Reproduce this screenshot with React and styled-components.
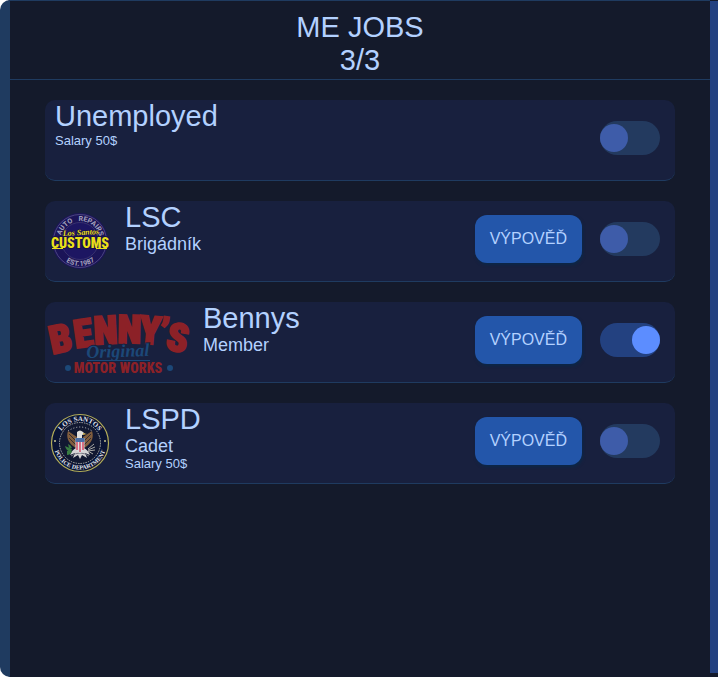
import React, { useState } from "react";
import styled, { createGlobalStyle } from "styled-components";

const GlobalStyle = createGlobalStyle`
  * { box-sizing: border-box; }
  body {
    margin: 0;
    background: #ffffff;
    color: #b3d1ff;
    font-family: "Liberation Sans", Arial, sans-serif;
  }
`;

const Panel = styled.main`
  display: flex;
  min-height: 100vh;
  background: #141a2b;
  border-left: 10px solid #1f3b60;
  border-radius: 10px 0 0 10px;
`;

const Content = styled.div`
  flex: 1;
  min-width: 0;
  border-top: 1px solid #1f3b60;
`;

const ScrollRail = styled.div`
  display: flex;
  width: 8px;
  padding: 1px 0 4px;
`;

const ScrollThumb = styled.div`
  flex: 1;
  background: #234180;
`;

const Header = styled.header`
  padding: 10px 0 2px;
  border-bottom: 1px solid #1f3b60;
  text-align: center;
`;

const Title = styled.h1`
  margin: 0;
  font-size: 29px;
  line-height: 33px;
  font-weight: 400;
`;

const Count = styled.p`
  margin: 0;
  font-size: 29px;
  line-height: 33px;
`;

const JobList = styled.ul`
  display: flex;
  flex-direction: column;
  gap: 20px;
  margin: 0;
  padding: 20px 35px;
  list-style: none;
`;

const JobCard = styled.li`
  display: flex;
  align-items: flex-start;
  min-height: 81px;
  padding: 0 15px 0 ${(p) => (p.$hasLogo ? 5 : 10)}px;
  background: #18203e;
  border-bottom: 1px solid #1f3b60;
  border-radius: 10px;
`;

const Logo = styled.svg`
  flex: none;
  width: ${(p) => p.$width}px;
  height: 60px;
  margin: 10px 15px 0 0;
  overflow: visible;
`;

const Info = styled.div`
  flex: 1;
  min-width: 0;
`;

const JobName = styled.h2`
  margin: 0;
  font-size: 29px;
  line-height: 33px;
  font-weight: 400;
`;

const Role = styled.p`
  margin: 0;
  font-size: 18px;
  line-height: 20px;
`;

const Salary = styled.p`
  margin: 0;
  font-size: 13px;
  line-height: 16px;
`;

const Controls = styled.div`
  display: flex;
  align-items: center;
  gap: 18px;
  height: 48px;
  margin-top: 14px;
`;

const QuitButton = styled.button`
  height: 48px;
  padding: 0 15px;
  border: 0;
  border-radius: 12px;
  background: #2356aa;
  box-shadow: 1px 2px 3px #0b2748;
  color: #b3d1ff;
  font: 16px "Liberation Sans", Arial, sans-serif;
  cursor: pointer;
`;

const Toggle = styled.input`
  appearance: none;
  display: flex;
  align-items: center;
  width: 60px;
  height: 34px;
  margin: 0;
  border-radius: 17px;
  background: #233a5f;
  cursor: pointer;

  &::before {
    content: "";
    width: 28px;
    height: 28px;
    border-radius: 50%;
    background: #3e5ca9;
  }

  &:checked {
    justify-content: flex-end;
    background: #234180;
  }

  &:checked::before {
    background: #5c8dff;
  }
`;

function CustomsLogo() {
  return (
    <Logo $width={60} viewBox="0 0 60 60" role="img" aria-label="Los Santos Customs">
      <defs>
        <path id="lsc-top" d="M10 30a20 20 0 0 1 40 0" />
        <path id="lsc-bottom" d="M5 30a25 25 0 0 0 50 0" />
      </defs>
      <circle cx="30" cy="30" r="28" fill="#1b1458" />
      <circle cx="30" cy="30" r="26.5" fill="none" stroke="#4b4580" strokeWidth="1" />
      <circle cx="30" cy="30" r="18.5" fill="#1d1662" stroke="#38316f" strokeWidth="1" />
      <g fill="#a5a2bd" fontFamily="Roboto" fontWeight="700" fontSize="7">
        <text textAnchor="middle"><textPath href="#lsc-top" startOffset="24%">AUTO</textPath></text>
        <text textAnchor="middle"><textPath href="#lsc-top" startOffset="70%">REPAIRS</textPath></text>
        <text textAnchor="middle"><textPath href="#lsc-bottom" startOffset="40%">EST.</textPath></text>
        <text textAnchor="middle"><textPath href="#lsc-bottom" startOffset="60%">1987</textPath></text>
      </g>
      <g fill="#e9df19" stroke="#171047" paintOrder="stroke" textAnchor="middle">
        <text x="31" y="24" fontFamily="Liberation Serif" fontStyle="italic" fontWeight="700" fontSize="8" strokeWidth="1" transform="rotate(-3 31 23)">Los Santos</text>
        <text x="30" y="37" fontFamily="Roboto Condensed, Roboto" fontWeight="900" fontSize="14" strokeWidth="2">CUSTOMS</text>
      </g>
      <path d="M2 37.500h11M46 37.500h11" stroke="#e9df19" strokeWidth="1" />
    </Logo>
  );
}

const ARCHED_LETTERS = [
  ["B", 13, 40, -12],
  ["E", 35, 35, -8],
  ["N", 56, 32, -3],
  ["N", 79, 31, 1],
  ["Y", 99, 32, 5],
  ["’", 112, 34, 8],
  ["S", 125, 39, 11],
];

function BennysLogo() {
  return (
    <Logo $width={138} viewBox="0 0 138 60" role="img" aria-label="Benny's Original Motor Works">
      <g fill="#8c2127" stroke="#8c2127" strokeWidth="2" fontFamily="Roboto Condensed, Roboto" fontWeight="900" fontSize="39" textAnchor="middle">
        {ARCHED_LETTERS.map(([letter, x, y, angle]) => (
          <text key={x} x={x} y={y} transform={`rotate(${angle} ${x} ${y})`}>{letter}</text>
        ))}
      </g>
      <text x="68" y="45" fill="#1c4878" stroke="#18203e" strokeWidth="2" paintOrder="stroke" fontFamily="Liberation Serif" fontStyle="italic" fontWeight="700" fontSize="18" textAnchor="middle" transform="rotate(-2 68 45)">Original</text>
      <path d="M37 48.500h63" stroke="#1c4878" strokeWidth="1" />
      <g fill="#1c4878">
        <circle cx="18" cy="56" r="3" />
        <circle cx="120" cy="56" r="3" />
      </g>
      <g fill="#8c2127" fontFamily="Roboto Condensed, Roboto" fontWeight="900" fontSize="14" textAnchor="middle">
        <text x="45" y="61">MOTOR</text>
        <text x="91" y="61">WORKS</text>
      </g>
    </Logo>
  );
}

function PoliceLogo() {
  return (
    <Logo $width={60} viewBox="0 0 60 60" role="img" aria-label="Los Santos Police Department">
      <defs>
        <path id="pd-top" d="M8 30a22 22 0 0 1 44 0" />
        <path id="pd-bottom" d="M3.500 30a26.500 26.500 0 0 0 53 0" />
      </defs>
      <circle cx="30" cy="30" r="28.500" fill="#091334" stroke="#b4ae59" strokeWidth="1.200" />
      <circle cx="30" cy="30" r="20.500" fill="#111831" stroke="#aeb0aa" strokeWidth="1" strokeDasharray="1.500 1" />
      <g fill="#e2e5ee" fontFamily="Liberation Serif" fontWeight="700" textAnchor="middle">
        <text fontSize="7"><textPath href="#pd-top" startOffset="50%">LOS SANTOS</textPath></text>
        <text fontSize="6"><textPath href="#pd-bottom" startOffset="50%">POLICE DEPARTMENT</textPath></text>
      </g>
      <g fill="#c9c791">
        <circle cx="5" cy="28" r="1" />
        <circle cx="55" cy="28" r="1" />
      </g>
      <path d="M18 18Q30 10 42 18" fill="none" stroke="#c7c9ce" strokeWidth="1" strokeDasharray="1 2" />
      <path d="M27 24 18 18C16 24 18 29 23 33l4 3zM33 24l9-6c2 6 0 11-5 15l-4 3z" fill="#805d3d" />
      <path d="m19 21 7 7m-7-3 7 7m15-11-7 7m7-3-7 7" stroke="#342d32" strokeWidth="1" />
      <path d="M26 35q-4 2-6 7l5-2-2 5 5-3 2 4 2-4 5 3-2-5 5 2q-2-5-6-7z" fill="#d5d4d5" />
      <path d="M21 43q9-6 18 0" fill="none" stroke="#777783" strokeWidth="1" />
      <path d="M27 19q3-3 6 0l2 2-3 1v4h-5v-4z" fill="#e0dfdc" />
      <path d="m33 20 4 1-4 1z" fill="#c7a543" />
      <path d="M25.500 25h9v9q-1 5-4.500 6-4-1-4.500-6z" fill="#dddde2" />
      <path d="M27 29v8m3-8v10m3-10v8" stroke="#d34e66" strokeWidth="1.500" />
      <path d="M25.500 25h9v4h-9z" fill="#486da5" />
      <path d="M22 36q-5-2-7-3 1 5 6 6zm-3-1-1-4q3 1 4 4m-5 3 0 4q4 0 5-4" fill="#397c42" />
      <path d="m38 36 6-5m-6 6 7-3m-7 4 7-1m-7 1 5 3" stroke="#aaa9a5" strokeWidth="1" />
    </Logo>
  );
}

const JOBS = [
  { id: "unemployed", name: "Unemployed", salary: "Salary 50$" },
  { id: "lsc", name: "LSC", role: "Brigádník", logo: CustomsLogo },
  { id: "bennys", name: "Bennys", role: "Member", logo: BennysLogo },
  { id: "lspd", name: "LSPD", role: "Cadet", salary: "Salary 50$", logo: PoliceLogo },
];

export default function App() {
  const [activeJob, setActiveJob] = useState("bennys");

  return (
    <>
      <GlobalStyle />
      <Panel>
        <Content>
          <Header>
            <Title>ME JOBS</Title>
            <Count>3/3</Count>
          </Header>
          <JobList>
            {JOBS.map(({ id, name, role, salary, logo: JobLogo }) => (
              <JobCard key={id} $hasLogo={Boolean(JobLogo)}>
                {JobLogo && <JobLogo />}
                <Info>
                  <JobName id={`${id}-name`}>{name}</JobName>
                  {role && <Role>{role}</Role>}
                  {salary && <Salary>{salary}</Salary>}
                </Info>
                <Controls>
                  {role && <QuitButton type="button">VÝPOVĚĎ</QuitButton>}
                  <Toggle
                    type="checkbox"
                    aria-labelledby={`${id}-name`}
                    checked={activeJob === id}
                    onChange={() => setActiveJob(id)}
                  />
                </Controls>
              </JobCard>
            ))}
          </JobList>
        </Content>
        <ScrollRail>
          <ScrollThumb />
        </ScrollRail>
      </Panel>
    </>
  );
}
